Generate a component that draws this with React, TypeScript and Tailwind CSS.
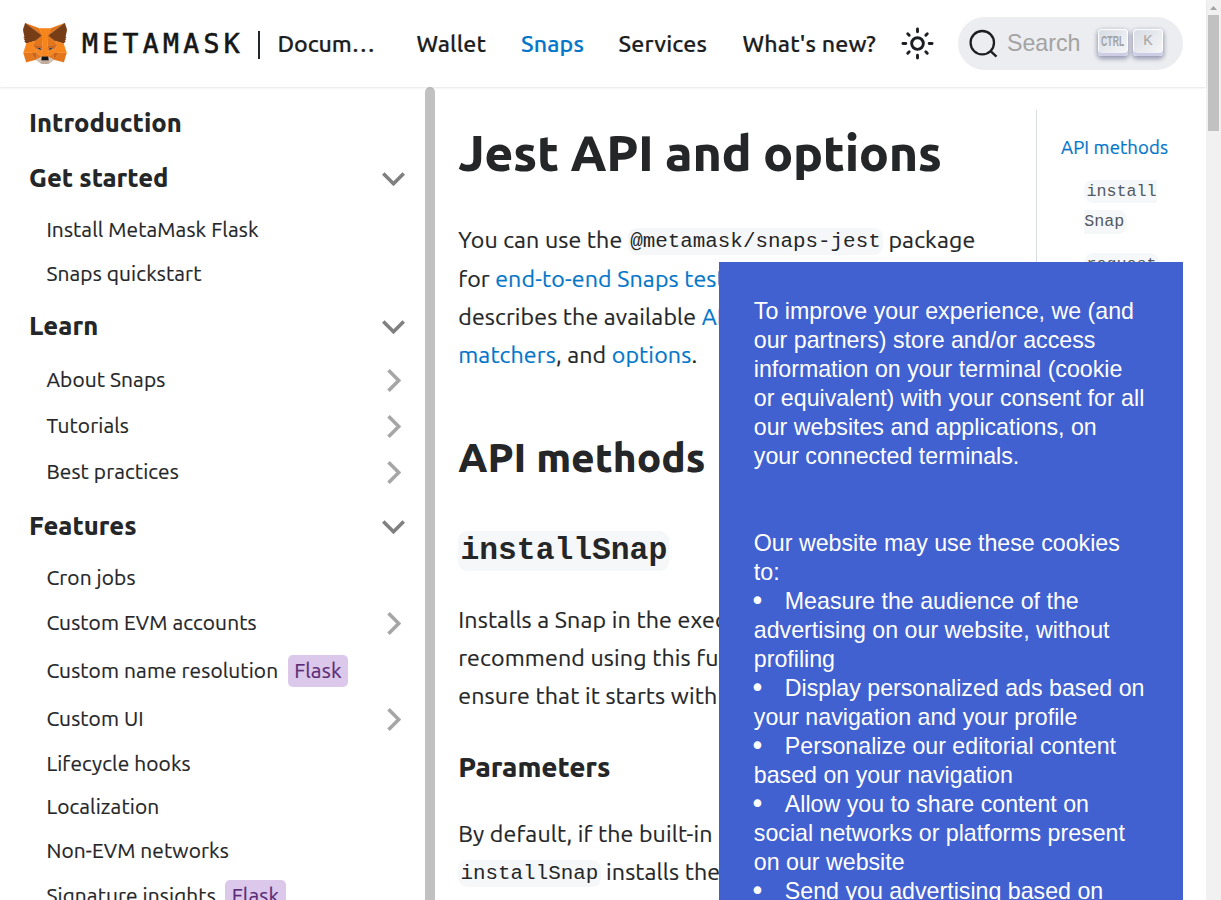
import React from 'react';

type Shape = [string, string];

const FOX: Shape[] = [
  ['#e2761b', '274.1,35.5 174.6,109.4 193,65.8'],
  ['#e4761b', '44.4,35.5 143.1,110.1 125.6,65.8'],
  ['#e4761b', '238.3,206.8 211.8,247.4 268.5,263 284.8,207.7'],
  ['#e4761b', '33.9,207.7 50.1,263 106.8,247.4 80.3,206.8'],
  ['#e4761b', '103.6,138.2 87.8,162.1 144.1,164.6 142.1,104.1'],
  ['#e4761b', '214.9,138.2 175.9,103.4 174.6,164.6 230.8,162.1'],
  ['#e4761b', '106.8,247.4 140.6,230.9 111.4,208.1'],
  ['#e4761b', '177.9,230.9 211.8,247.4 207.1,208.1'],
  ['#d7c1b3', '211.8,247.4 177.9,230.9 180.6,253 180.3,262.3'],
  ['#d7c1b3', '106.8,247.4 138.3,262.3 138.1,253 140.6,230.9'],
  ['#233447', '138.8,193.5 110.6,185.2 130.5,176.1'],
  ['#233447', '179.7,193.5 188,176.1 208,185.2'],
  ['#cd6116', '106.8,247.4 111.6,206.8 80.3,207.7'],
  ['#cd6116', '207,206.8 211.8,247.4 238.3,207.7'],
  ['#cd6116', '230.8,162.1 174.6,164.6 179.8,193.5 188.1,176.1 208.1,185.2'],
  ['#cd6116', '110.6,185.2 130.6,176.1 138.8,193.5 144.1,164.6 87.8,162.1'],
  ['#e4751f', '87.8,162.1 111.4,208.1 110.6,185.2'],
  ['#e4751f', '208.1,185.2 207.1,208.1 230.8,162.1'],
  ['#e4751f', '144.1,164.6 138.8,193.5 145.4,227.6 146.9,182.7'],
  ['#e4751f', '174.6,164.6 171.9,182.6 173.1,227.6 179.8,193.5'],
  ['#f6851b', '179.8,193.5 173.1,227.6 177.9,230.9 207.1,208.1 208.1,185.2'],
  ['#f6851b', '110.6,185.2 111.4,208.1 140.6,230.9 145.4,227.6 138.8,193.5'],
  ['#c0ad9e', '180.3,262.3 180.6,253 178.1,250.8 140.4,250.8 138.1,253 138.3,262.3 106.8,247.4 117.8,256.4 140.1,271.9 178.4,271.9 200.8,256.4 211.8,247.4'],
  ['#161616', '177.9,230.9 173.1,227.6 145.4,227.6 140.6,230.9 138.1,253 140.4,250.8 178.1,250.8 180.6,253'],
  ['#763d16', '278.3,114.2 286.8,73.4 274.1,35.5 177.9,106.9 214.9,138.2 267.2,153.5 278.8,140 273.8,136.4 281.8,129.1 275.6,124.3 283.6,118.2'],
  ['#763d16', '31.8,73.4 40.3,114.2 34.9,118.2 42.9,124.3 36.8,129.1 44.8,136.4 39.8,140 51.3,153.5 103.6,138.2 140.6,106.9 44.4,35.5'],
  ['#f6851b', '267.2,153.5 214.9,138.2 230.8,162.1 207.1,208.1 238.3,207.7 284.8,207.7'],
  ['#f6851b', '103.6,138.2 51.3,153.5 33.9,207.7 80.3,207.7 111.4,208.1 87.8,162.1'],
  ['#f6851b', '174.6,164.6 177.9,106.9 193.1,65.8 125.6,65.8 140.6,106.9 144.1,164.6 145.3,182.8 145.4,227.6 173.1,227.6 173.3,182.8'],
];

function Fox() {
  return (
    <svg className="h-[41px] w-[44px] shrink-0" viewBox="31.8 35.5 255 236.4">
      {FOX.map(([fill, points], i) => (
        <polygon key={i} fill={fill} stroke={fill} strokeWidth="1" points={points} />
      ))}
    </svg>
  );
}

function Chevron({ open }: { open: boolean }) {
  return open ? (
    <svg className="mt-0.5 mr-[20px] h-[14px] w-[23px]" viewBox="0 0 23 14">
      <path d="M1.3 1.5 11.5 11.7 21.7 1.5" fill="none" stroke="#808080" strokeWidth="3.6" />
    </svg>
  ) : (
    <svg className="mr-[24px] h-[23px] w-[14px]" viewBox="0 0 14 23">
      <path d="M1.5 1.3 11.7 11.5 1.5 21.7" fill="none" stroke="#a6a6a6" strokeWidth="3.6" />
    </svg>
  );
}

type Item = { label: string; gap: string; head?: boolean; chevron?: 'down' | 'right'; flask?: boolean };

const ITEMS: Item[] = [
  { label: 'Introduction', gap: 'mt-[21px]', head: true },
  { label: 'Get started', gap: 'mt-[25px]', head: true, chevron: 'down' },
  { label: 'Install MetaMask Flask', gap: 'mt-[22px]' },
  { label: 'Snaps quickstart', gap: 'mt-[14px]' },
  { label: 'Learn', gap: 'mt-[22px]', head: true, chevron: 'down' },
  { label: 'About Snaps', gap: 'mt-[24px]', chevron: 'right' },
  { label: 'Tutorials', gap: 'mt-[16px]', chevron: 'right' },
  { label: 'Best practices', gap: 'mt-[16px]', chevron: 'right' },
  { label: 'Features', gap: 'mt-[24px]', head: true, chevron: 'down' },
  { label: 'Cron jobs', gap: 'mt-[22px]' },
  { label: 'Custom EVM accounts', gap: 'mt-[15px]', chevron: 'right' },
  { label: 'Custom name resolution', gap: 'mt-[18px]', flask: true },
  { label: 'Custom UI', gap: 'mt-[18px]', chevron: 'right' },
  { label: 'Lifecycle hooks', gap: 'mt-[15px]' },
  { label: 'Localization', gap: 'mt-[13px]' },
  { label: 'Non-EVM networks', gap: 'mt-[14px]' },
  { label: 'Signature insights', gap: 'mt-[15px]', flask: true },
];

function Row({ item }: { item: Item }) {
  return (
    <li
      className={`flex h-[30px] shrink-0 items-center ${item.gap} ${
        item.head ? 'pl-[29px] text-[25.52px] font-[800]' : 'pl-[46.4px] text-[20.88px] tracking-[0.12px] [-webkit-text-stroke:0.2px]'
      }`}
    >
      <span>{item.label}</span>
      {item.flask && (
        <span className="ml-[9.5px] flex h-8 items-center rounded-[5px] bg-[#dcc8ea] px-[6.4px] text-[#5b2c78]">Flask</span>
      )}
      <span className="flex-1" />
      {item.chevron && <Chevron open={item.chevron === 'down'} />}
    </li>
  );
}

function Code({ children }: { children: React.ReactNode }) {
  return (
    <code className="rounded-[9px] bg-[#f6f7f8] p-[2.3px] align-middle font-['Liberation_Mono',monospace] text-[0.9em] leading-none tracking-normal [-webkit-text-stroke:0]">
      {children}
    </code>
  );
}

function Key({ children }: { children: React.ReactNode }) {
  return (
    <kbd className="flex h-[27px] w-[30px] items-center justify-center rounded-[4px] bg-linear-[-225deg,#d5dbe4,#f8f8f8] pb-[3px] font-['Liberation_Sans',sans-serif] text-[#a3a3a3] shadow-[inset_0_-3px_0_0_#cdcde6,inset_0_0_1px_1px_#fff,0_2px_4px_1px_rgba(30,35,90,0.4)]">
      {children}
    </kbd>
  );
}

function Header() {
  return (
    <header className="z-10 flex h-[87px] shrink-0 items-center shadow-[0_1px_2px_0_rgba(0,0,0,0.1)]">
      <div className="flex items-center pl-[23px]">
        <Fox />
        <span className="ml-[15px] w-[168px] pt-[2px] font-['DejaVu_Sans_Mono',monospace] text-[26.5px] leading-none tracking-[4.3px] text-[#161616] [-webkit-text-stroke:0.6px_#161616]">METAMASK</span>
        <span className="mt-[2px] ml-[8px] h-[28px] w-[1.5px] bg-[#24272a]" />
      </div>
      <nav className="flex flex-1 items-center text-[23.2px] font-medium tracking-[0.14px] text-[#1c1e21] [-webkit-text-stroke:0.2px]">
        <span className="ml-[18px] w-[139px] tracking-[-0.1px]">Docum…</span>
        <span className="w-[104.5px]">Wallet</span>
        <span className="w-[97.5px] text-[#0376c9]">Snaps</span>
        <span className="w-[124px]">Services</span>
        <span>What's new?</span>
      </nav>
      <svg className="mr-[23px] size-[35px]" viewBox="0 0 24 24" fill="none" stroke="#1c1e21" strokeWidth="2" strokeLinecap="round">
        <circle cx="12" cy="12" r="4" />
        <path d="M12 2v2M12 20v2M2 12h2M20 12h2M5.3 5.3l1 1M17.7 17.7l1 1M5.3 18.7l1-1M17.7 6.3l1-1" />
      </svg>
      <div className="mr-[23px] flex h-[53px] w-[225px] items-center rounded-full bg-[#ebedf0] pl-[11px]">
        <svg className="size-[30px]" viewBox="0 0 30 30" fill="none" stroke="#1c1e21" strokeWidth="2.3">
          <circle cx="13.3" cy="13.7" r="11.7" />
          <path d="M21.3 21.8 27.5 27.7" />
        </svg>
        <span className="ml-[8px] w-[91px] font-['Liberation_Sans',sans-serif] text-[23.2px] text-[#a3a3a3]">Search</span>
        <span className="-mt-[3px] flex gap-[5px]">
          <Key>
            <span className="scale-x-[0.56] text-[15.5px] font-bold">CTRL</span>
          </Key>
          <Key>
            <span className="text-[14px]">K</span>
          </Key>
        </span>
      </div>
    </header>
  );
}

const COOKIE: string[] = [
  'To improve your experience, we (and',
  'our partners) store and/or access',
  'information on your terminal (cookie',
  'or equivalent) with your consent for all',
  'our websites and applications, on',
  'your connected terminals.',
  '',
  '',
  'Our website may use these cookies',
  'to:',
  '•Measure the audience of the',
  'advertising on our website, without',
  'profiling',
  '•Display personalized ads based on',
  'your navigation and your profile',
  '•Personalize our editorial content',
  'based on your navigation',
  '•Allow you to share content on',
  'social networks or platforms present',
  'on our website',
  '•Send you advertising based on',
];

function CookieBanner() {
  return (
    <div className="absolute top-[262px] right-[38px] z-20 h-[638px] w-[464px] overflow-hidden bg-[#4261d0] pt-[35px] pl-[34.8px] font-['Liberation_Sans',sans-serif] text-[23.2px] leading-[29px] font-normal whitespace-nowrap text-white">
      {COOKIE.map((line, i) => (
        <p key={i} className="h-[29px]">
          {line.startsWith('•') ? (
            <span className="flex">
              <span className="-ml-[4px] w-[35px] font-['DejaVu_Sans',sans-serif] text-[26px]">•</span>
              {line.slice(1)}
            </span>
          ) : (
            line
          )}
        </p>
      ))}
    </div>
  );
}

function Link({ children }: { children: React.ReactNode }) {
  return <a className="text-[#0376c9]">{children}</a>;
}

export default function App() {
  return (
    <div className="relative flex h-[900px] w-[1221px] overflow-hidden bg-white font-[Ubuntu,'Noto_Sans',sans-serif] text-[#242628]">
      <div className="flex w-[1206px] flex-col">
        <Header />
        <div className="flex min-h-0 flex-1">
          <aside className="flex w-[435px] shrink-0 overflow-hidden">
            <ul className="flex flex-1 flex-col overflow-hidden">
              {ITEMS.map((item) => (
                <Row key={item.label} item={item} />
              ))}
            </ul>
            <div className="w-[10px] rounded-t-[5px] bg-[#c1c1c1]" />
          </aside>
          <main className="w-[601px] shrink-0 overflow-hidden pl-[23.2px] text-[23.2px] leading-[38.3px] whitespace-nowrap">
            <h1 className="mt-[34px] text-[50px] leading-[62px] font-[800] tracking-[-0.36px]">Jest API and options</h1>
            <p className="mt-[37.4px] tracking-[0.13px] [-webkit-text-stroke:0.2px]">
              You can use the <Code>@metamask/snaps-jest</Code> package
              <br />
              for <Link>end-to-end Snaps testing</Link>
              <br />
              describes the available <Link>API</Link>
              <br />
              <Link>matchers</Link>, and <Link>options</Link>.
            </p>
            <h2 className="mt-[57.6px] text-[40.6px] leading-[52px] font-[800]">API methods</h2>
            <h3 className="mt-[43px] text-[34.8px] leading-[44px] font-bold">
              <Code>installSnap</Code>
            </h3>
            <p className="mt-[29.4px] tracking-[0.15px] [-webkit-text-stroke:0.2px]">
              Installs a Snap in the execution
              <br />
              recommend using this function
              <br />
              ensure that it starts with
            </p>
            <h4 className="mt-[34.6px] text-[27.84px] leading-[35px] font-[800] tracking-[-0.1px]">Parameters</h4>
            <p className="mt-[30px] tracking-[0.13px] [-webkit-text-stroke:0.2px]">
              By default, if the built-in
              <br />
              <Code>installSnap</Code> installs the
            </p>
          </main>
          <div className="mt-[23px] w-[132px] border-l border-[#dadde1] pt-[22.6px] pl-[24px] text-[18.56px] leading-[30.6px]">
            <a className="block tracking-[0.1px] whitespace-nowrap text-[#0376c9] [-webkit-text-stroke:0.2px]">API methods</a>
            <ul className="pt-[13px] pl-[23.2px] text-[#535a61]">
              <li>
                <Code>
                  install
                  <wbr />
                  Snap
                </Code>
              </li>
              <li className="mt-[11.6px]">
                <Code>request</Code>
              </li>
            </ul>
          </div>
        </div>
      </div>
      <div className="flex w-[15px] flex-col items-center bg-[#f1f1f1]">
        <svg className="h-[15px] w-[15px]" viewBox="0 0 15 15">
          <path d="M4 10 7.5 6 11 10z" fill="#a3a3a3" />
        </svg>
        <div className="h-[116px] w-[11px] bg-[#c1c1c1]" />
      </div>
      <CookieBanner />
    </div>
  );
}
